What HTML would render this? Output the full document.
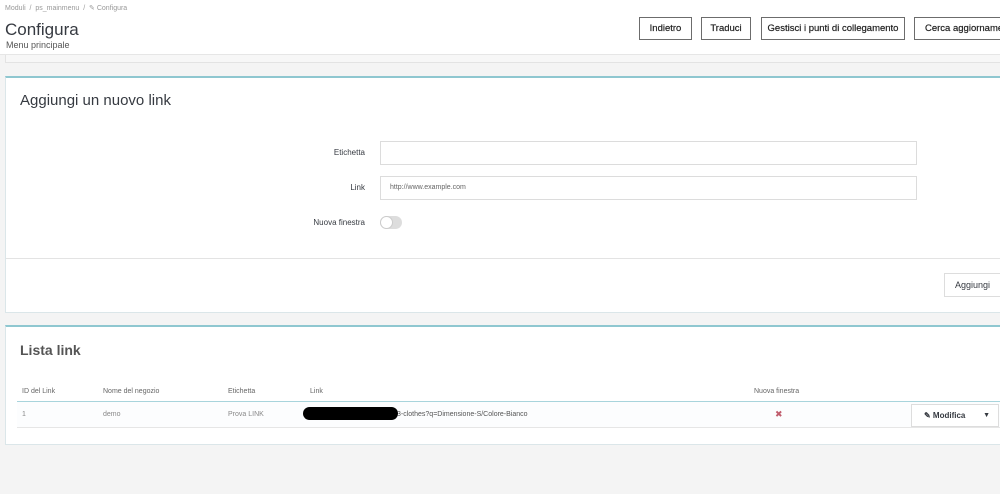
<!DOCTYPE html>
<html><head><meta charset="utf-8"><style>
*{box-sizing:border-box;margin:0;padding:0}
body{width:1000px;height:494px;overflow:hidden;background:#f4f4f4;font-family:"Liberation Sans",sans-serif;color:#363a41;position:relative}
.a{position:absolute}
.hdr{left:0;top:0;width:1000px;height:55px;background:#fff;border-bottom:1px solid #e6e6e6}
.btn{position:absolute;top:17px;height:23px;border:1px solid #6c6c6c;background:#fff;font-size:9.5px;color:#222;line-height:21px;text-align:center;white-space:nowrap;overflow:hidden;-webkit-text-stroke:0.2px #222}
.card{background:#fff;border:1px solid #dbe6e9;border-top:2px solid #8fc7d0;left:5px;width:1000px}
.lbl{font-size:8px;text-align:right;width:100px;left:265px}
.inp{left:380px;width:537px;height:24px;border:1px solid #dcdcdc;background:#fff;font-size:7px;color:#666;padding-left:9px;line-height:22px}
.th{font-size:7px;color:#666;top:388px}
.td{font-size:7px;color:#888;top:411px}
</style></head><body>
<div class="a hdr"></div>
<div class="a" style="left:5px;top:4px;font-size:7px;color:#999">Moduli &nbsp;/&nbsp; ps_mainmenu &nbsp;/&nbsp; ✎ Configura</div>
<div class="a" style="left:5px;top:20px;font-size:17px;color:#363a41">Configura</div>
<div class="a" style="left:6px;top:40px;font-size:9px;color:#555">Menu principale</div>
<div class="btn" style="left:639px;width:53px">Indietro</div>
<div class="btn" style="left:701px;width:50px">Traduci</div>
<div class="btn" style="left:761px;width:144px">Gestisci i punti di collegamento</div>
<div class="btn" style="left:914px;width:100px;text-align:left;padding-left:10px">Cerca aggiornamenti</div>
<div class="a" style="left:5px;top:55px;width:1000px;height:8px;background:#f7f7f7;border:1px solid #e3e3e3;border-top:none"></div>

<div class="a card" style="top:76px;height:237px"></div>
<div class="a" style="left:20px;top:92px;font-size:15px;color:#363a41">Aggiungi un nuovo link</div>
<div class="a lbl" style="top:148px">Etichetta</div>
<div class="a inp" style="top:141px"></div>
<div class="a lbl" style="top:183px">Link</div>
<div class="a inp" style="top:176px">http://www.example.com</div>
<div class="a lbl" style="top:218px">Nuova finestra</div>
<div class="a" style="left:380px;top:216px;width:22px;height:13px;border-radius:7px;background:#ddd"></div>
<div class="a" style="left:380px;top:216px;width:13px;height:13px;border-radius:50%;background:#fff;border:1px solid #ccc"></div>
<div class="a" style="left:6px;top:258px;width:994px;height:1px;background:#e3e3e3"></div>
<div class="a" style="left:944px;top:273px;width:60px;height:24px;border:1px solid #ddd;background:#fff;font-size:9px;line-height:22px;padding-left:10px">Aggiungi</div>

<div class="a card" style="top:325px;height:120px"></div>
<div class="a" style="left:20px;top:342px;font-size:14px;font-weight:bold;color:#555">Lista link</div>
<div class="a th" style="left:22px">ID del Link</div>
<div class="a th" style="left:103px">Nome del negozio</div>
<div class="a th" style="left:228px">Etichetta</div>
<div class="a th" style="left:310px">Link</div>
<div class="a th" style="left:754px">Nuova finestra</div>
<div class="a" style="left:17px;top:401px;width:983px;height:1px;background:#a8d4dc"></div>
<div class="a" style="left:17px;top:402px;width:983px;height:25px;background:#fcfdfe"></div>
<div class="a" style="left:17px;top:427px;width:983px;height:1px;background:#e6e6e6"></div>
<div class="a td" style="left:22px">1</div>
<div class="a td" style="left:103px">demo</div>
<div class="a td" style="left:228px">Prova LINK</div>
<div class="a" style="left:303px;top:407px;width:95px;height:13px;border-radius:7px;background:#000"></div>
<div class="a td" style="left:397px;color:#555">3-clothes?q=Dimensione-S/Colore-Bianco</div>
<div class="a" style="left:775px;top:409px;font-size:9px;color:#c05c6c">✖</div>
<div class="a" style="left:911px;top:404px;width:88px;height:23px;border:1px solid #ddd;background:#fff;font-size:8px;font-weight:bold;line-height:21px;padding-left:12px">✎ Modifica<span style="position:absolute;right:8px;font-size:7px">▼</span></div>
</body></html>
